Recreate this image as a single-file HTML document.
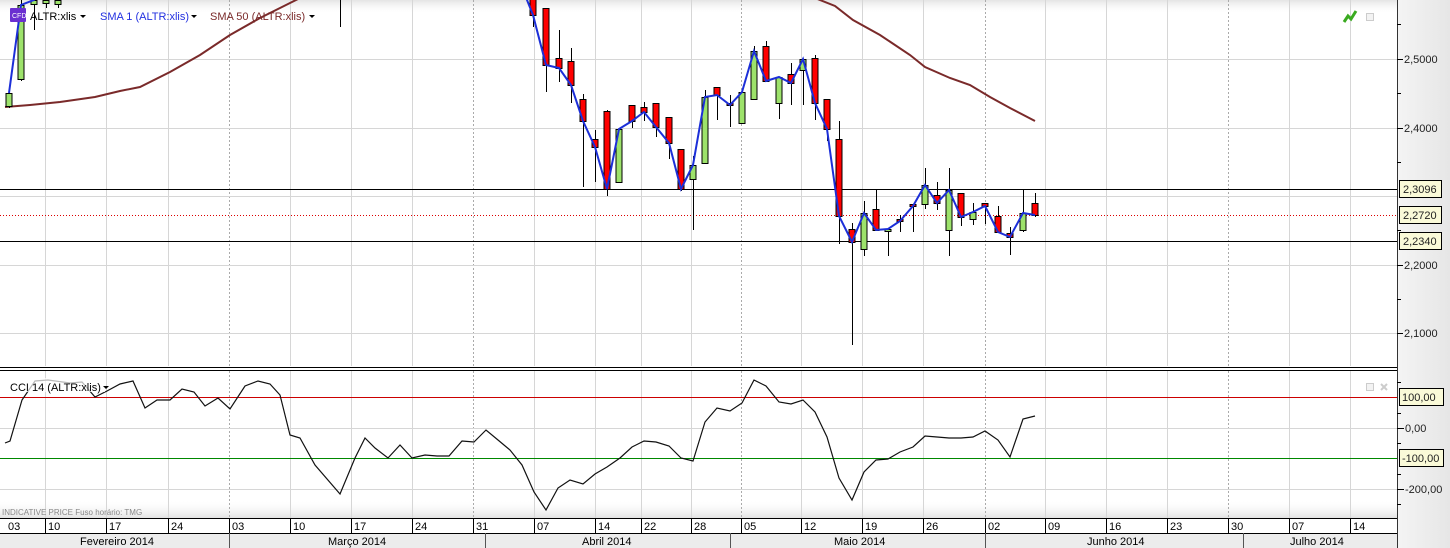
<!DOCTYPE html>
<html><head><meta charset="utf-8"><style>
html,body{margin:0;padding:0;width:1450px;height:548px;overflow:hidden;background:#fff;font-family:"Liberation Sans",sans-serif;}
svg text{font-family:"Liberation Sans",sans-serif;}
</style></head><body>
<svg id="s" width="1450" height="548" xmlns="http://www.w3.org/2000/svg">
<defs>
<linearGradient id="tg" x1="0" y1="0" x2="0" y2="1"><stop offset="0" stop-color="#e4e4e4"/><stop offset="1" stop-color="#fff" stop-opacity="0"/></linearGradient>
<linearGradient id="bg" x1="0" y1="0" x2="0" y2="1"><stop offset="0" stop-color="#fff" stop-opacity="0"/><stop offset="1" stop-color="#e2e2e2"/></linearGradient>
<linearGradient id="ax" x1="0" y1="0" x2="1" y2="0"><stop offset="0" stop-color="#f4f4f4"/><stop offset="1" stop-color="#e6e6e6"/></linearGradient>
</defs>
<rect x="0" y="0" width="1397" height="548" fill="#fff"/>
<rect x="0" y="0" width="1397" height="14" fill="url(#tg)"/>
<rect x="0" y="500" width="1397" height="18" fill="url(#bg)"/>
<g id="grid"></g>
<g id="main"></g>
<rect x="1397" y="0" width="53" height="548" fill="url(#ax)"/>
<line x1="1397.5" y1="0" x2="1397.5" y2="548" stroke="#333"/>
<g id="axis" font-size="11" fill="#222"></g>
</svg>
<script>
const S=document.getElementById('s');const NS='http://www.w3.org/2000/svg';
function el(p,t,a,txt){const e=document.createElementNS(NS,t);for(const k in a)e.setAttribute(k,a[k]);if(txt!==undefined)e.textContent=txt;document.getElementById(p).appendChild(e);return e;}
// vertical grid
const vx=[45,106,168,229,290,351,412,473,534,595,641,691,741,801,862,923,985,1045,1106,1167,1228,1289,1350];
const dashed=[229,473,741,985,1228];
vx.forEach(x=>{const d=dashed.includes(x);el('grid','line',{x1:x+.5,y1:0,x2:x+.5,y2:366,stroke:d?'#aaa':'#d6d6d6','stroke-dasharray':d?'2,2':''});el('grid','line',{x1:x+.5,y1:371,x2:x+.5,y2:518,stroke:d?'#aaa':'#d6d6d6','stroke-dasharray':d?'2,2':''});});
[59,128,196,265,333].forEach(y=>el('grid','line',{x1:0,y1:y+.5,x2:1397,y2:y+.5,stroke:'#d6d6d6'}));
[428,489].forEach(y=>el('grid','line',{x1:0,y1:y+.5,x2:1397,y2:y+.5,stroke:'#d6d6d6'}));
// horizontal levels
el('main','line',{x1:0,y1:189.5,x2:1397,y2:189.5,stroke:'#000'});
el('main','line',{x1:0,y1:241.5,x2:1397,y2:241.5,stroke:'#000'});
el('main','line',{x1:0,y1:215.5,x2:1397,y2:215.5,stroke:'#d00','stroke-dasharray':'1,2'});
el('main','line',{x1:0,y1:397.5,x2:1397,y2:397.5,stroke:'#c00'});
el('main','line',{x1:0,y1:458.5,x2:1397,y2:458.5,stroke:'#080'});
// SMA50
el('main','polyline',{points:'5,107 30,105 60,102 95,97 120,91 140,87 170,72 200,55 230,35 260,18 290,3 300,-2',fill:'none',stroke:'#7a2a2a','stroke-width':2});
el('main','polyline',{points:'815,-2 835,6 853,20 880,35 910,55 925,67 950,78 970,85 990,97 1010,108 1035,121',fill:'none',stroke:'#7a2a2a','stroke-width':2});
// candles: x, bodyTop, bodyBot, hi, lo, color(g/r)
const C=[[9,93,106,91,108,'g'],[21,5,79,0,81,'g'],[34,0,4,-2,30,'g'],[46,0,3,-2,8,'g'],[58,0,4,-2,8,'g'],[340,-5,-3,-5,27,'r'],
[533,-5,15,-5,27,'r'],[546,8,65,8,92,'r'],[559,58,68,30,82,'r'],[571,61,85,48,103,'r'],[583,99,121,94,187,'r'],[595,139,147,130,182,'r'],[607,111,189,110,196,'r'],[619,129,182,129,182,'g'],[632,105,121,105,128,'r'],[644,107,112,102,121,'r'],[656,103,127,103,137,'r'],[669,117,143,117,159,'r'],[681,149,189,149,191,'r'],[693,165,179,156,230,'g'],[705,97,163,90,163,'g'],[717,87,95,87,120,'r'],[730,103,105,95,127,'r'],[742,92,123,92,123,'g'],[754,51,99,46,99,'g'],[766,46,81,41,81,'r'],[779,77,103,77,119,'g'],[791,74,83,63,105,'r'],[803,59,70,59,105,'g'],[815,58,103,55,120,'r'],[827,99,129,99,141,'r'],[839,139,216,121,244,'r'],[852,229,242,223,345,'r'],[864,213,249,201,256,'g'],[876,209,230,190,230,'r'],[888,229,231,229,256,'g'],[900,219,221,215,232,'r'],[913,204,206,204,232,'r'],[925,185,204,168,209,'g'],[937,195,203,182,210,'r'],[949,190,230,168,256,'g'],[961,193,217,193,226,'r'],[973,212,219,203,225,'g'],[985,203,206,203,224,'r'],[998,216,232,206,232,'r'],[1010,233,237,227,255,'r'],[1023,213,230,190,232,'g'],[1035,203,215,193,217,'r']];
C.forEach(c=>{el('main','line',{x1:c[0]+.5,y1:c[3],x2:c[0]+.5,y2:c[4],stroke:'#000'});el('main','rect',{x:c[0]-3,y:c[1]+.5,width:6,height:Math.max(1,c[2]-c[1]),fill:c[5]=='g'?'#9de26b':'#f00',stroke:'#000','stroke-width':1});});
// SMA1 (closes)
el('main','polyline',{points:'9,93 21,5 34,0 36,-5',fill:'none',stroke:'#1c2fd8','stroke-width':2});
let pts='525,-5 533,15';C.filter(c=>c[0]>=546).forEach(c=>{pts+=' '+c[0]+','+(c[5]=='g'?c[1]:c[2]);});
el('main','polyline',{points:pts,fill:'none',stroke:'#1c2fd8','stroke-width':2});
// pane separators
el('main','rect',{x:0,y:366,width:1450,height:5,fill:'#fff'});
el('main','line',{x1:0,y1:367.5,x2:1397,y2:367.5,stroke:'#000'});
el('main','line',{x1:0,y1:370.5,x2:1397,y2:370.5,stroke:'#000'});
// CCI
el('main','polyline',{points:'5,443 10,441 22,400 35,381 48,380 70,383 82,382 95,397 107,391 120,384 133,381 145,408 157,400 170,400 182,389 194,392 205,406 218,398 230,409 245,386 258,381 270,384 280,395 290,435 300,438 315,465 340,494 355,458 365,438 375,448 388,458 400,445 412,458 425,455 437,456 449,456 462,441 474,442 486,430 498,440 510,450 522,465 534,492 546,510 558,488 570,480 583,484 595,474 607,467 620,458 632,447 644,441 656,442 669,446 681,458 693,461 705,422 717,408 730,411 742,403 754,380 766,386 779,402 791,404 803,400 815,412 827,437 839,478 852,500 864,472 876,460 888,459 900,452 913,447 925,436 937,437 949,438 961,438 973,437 985,431 998,440 1010,457 1023,419 1035,416',fill:'none',stroke:'#111','stroke-width':1.2});
// legends
el('main','rect',{x:10,y:8,width:16,height:14,fill:'#6a2fd0',rx:1});
el('main','text',{x:12,y:18,'font-size':7,fill:'#fff'},'CFD');
el('main','text',{x:30,y:20,'font-size':11,fill:'#000'},'ALTR:xlis');
el('main','text',{x:100,y:20,'font-size':11,fill:'#2230e0'},'SMA 1 (ALTR:xlis)');
el('main','text',{x:210,y:20,'font-size':11,fill:'#7a2a2a'},'SMA 50 (ALTR:xlis)');
[[80,15],[191,15],[309,15]].forEach(p=>el('main','path',{d:`M${p[0]} ${p[1]}h6l-3 3z`,fill:'#000'}));
el('main','rect',{x:9,y:378,width:96,height:14,fill:'#fff','fill-opacity':0.7});
el('main','text',{x:10,y:391,'font-size':11,fill:'#000'},'CCI 14 (ALTR:xlis)');
el('main','path',{d:'M103 386h6l-3 3z',fill:'#000'});
el('main','text',{x:2,y:515,'font-size':8,fill:'#888'},'INDICATIVE PRICE   Fuso horário: TMG');
// top-right icons
el('main','path',{d:'M1344 22l4-6 3 3 5-8',fill:'none',stroke:'#3aaa20','stroke-width':3});
el('main','rect',{x:1366.5,y:13.5,width:7,height:7,fill:'#f3f3f3',stroke:'#ccc'});
el('main','rect',{x:1366.5,y:383.5,width:7,height:7,fill:'#f3f3f3',stroke:'#ccc'});
el('main','path',{d:'M1381 384l6 6M1387 384l-6 6',stroke:'#ccc','stroke-width':2});
// date axis
el('main','rect',{x:0,y:518,width:1397,height:30,fill:'#fff'});
el('main','rect',{x:0,y:533,width:1397,height:15,fill:'#ececec'});
el('main','line',{x1:0,y1:518.5,x2:1397,y2:518.5,stroke:'#000'});
el('main','line',{x1:0,y1:533.5,x2:1397,y2:533.5,stroke:'#000'});
const dl=['03','10','17','24','03','10','17','24','31','07','14','22','28','05','12','19','26','02','09','16','23','30','07','14'];
const lx=[0].concat(vx);
dl.forEach((t,i)=>{el('main','text',{x:lx[i]+(i==0?8:3),y:530,'font-size':11,fill:'#000'},t);if(i>0)el('main','line',{x1:lx[i]+.5,y1:518,x2:lx[i]+.5,y2:533,stroke:'#000'});});
[229,485,730,985,1243].forEach(x=>el('main','line',{x1:x+.5,y1:533,x2:x+.5,y2:548,stroke:'#555'}));
[['Fevereiro 2014',80],['Março 2014',328],['Abril 2014',582],['Maio 2014',834],['Junho 2014',1087],['Julho 2014',1290]].forEach(m=>el('main','text',{x:m[1],y:545,'font-size':11,fill:'#000'},m[0]));
// right axis
const A='axis';
[[59,'2,5000'],[128,'2,4000'],[159,''],[265,'2,2000'],[333,'2,1000']].forEach(p=>{if(p[1]){el(A,'line',{x1:1397,y1:p[0]+.5,x2:1403,y2:p[0]+.5,stroke:'#000'});el(A,'text',{x:1404,y:p[0]+4},p[1]);}});
[24,93,162,230,299].forEach(y=>el(A,'line',{x1:1397,y1:y+.5,x2:1401,y2:y+.5,stroke:'#000'}));
[[189,'2,3096'],[215,'2,2720'],[241,'2,2340']].forEach(p=>{el(A,'rect',{x:1399.5,y:p[0]-8.5,width:42,height:17,fill:'#fafad8',stroke:'#000'});el(A,'text',{x:1403,y:p[0]+4},p[1]);});
[[428,'0,00'],[489,'-200,00']].forEach(p=>{el(A,'line',{x1:1397,y1:p[0]+.5,x2:1404,y2:p[0]+.5,stroke:'#000'});el(A,'text',{x:1405,y:p[0]+4},p[1]);});
[382,413,443,474,504].forEach(y=>el(A,'line',{x1:1397,y1:y+.5,x2:1401,y2:y+.5,stroke:'#000'}));
[[397,'100,00'],[458,'-100,00']].forEach(p=>{el(A,'rect',{x:1399.5,y:p[0]-8.5,width:44,height:17,fill:'#fafad8',stroke:'#000'});el(A,'text',{x:1402,y:p[0]+4},p[1]);});
</script>
</body></html>
